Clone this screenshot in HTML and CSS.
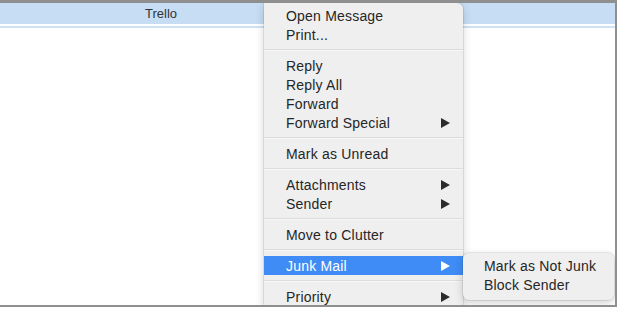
FILE: index.html
```html
<!DOCTYPE html>
<html lang="en">
<head>
    <meta charset="UTF-8">
    <title>Message list - context menu</title>
    <link rel="stylesheet" href="styles.css">
</head>
<body>
    <div class="frame">
        <div class="list">
            <div class="row row-selected">
                <div class="cell cell-from">Trello</div>
            </div>
            <div class="row-line"></div>
        </div>

        <div class="menu">
            <div class="menu-item">Open Message</div>
            <div class="menu-item">Print...</div>
            <div class="menu-sep"></div>
            <div class="menu-item">Reply</div>
            <div class="menu-item">Reply All</div>
            <div class="menu-item">Forward</div>
            <div class="menu-item has-sub">Forward Special <span class="arrow"></span></div>
            <div class="menu-sep"></div>
            <div class="menu-item">Mark as Unread</div>
            <div class="menu-sep"></div>
            <div class="menu-item has-sub">Attachments <span class="arrow"></span></div>
            <div class="menu-item has-sub">Sender <span class="arrow"></span></div>
            <div class="menu-sep"></div>
            <div class="menu-item">Move to Clutter</div>
            <div class="menu-sep"></div>
            <div class="menu-item has-sub active">Junk Mail <span class="arrow"></span></div>
            <div class="menu-sep"></div>
            <div class="menu-item has-sub">Priority <span class="arrow"></span></div>
        </div>

        <div class="menu submenu">
            <div class="menu-item">Mark as Not Junk</div>
            <div class="menu-item">Block Sender</div>
        </div>
    </div>
</body>
</html>
```

FILE: styles.css
```css
* {
    box-sizing: border-box;
    margin: 0;
    padding: 0;
}

body {
    font-family: 'Liberation Sans', Arial, sans-serif;
    background-color: white;
    color: #262626;
}

.frame {
    position: relative;
    width: 617px;
    height: 307px;
    border-top: 3px solid #8f8f8f;
    border-right: 2px solid #8f8f8f;
    border-bottom: 2px solid #8f8f8f;
    overflow: hidden;
    background-color: white;
}

.row {
    display: flex;
    height: 21px;
    align-items: center;
    font-size: 13px;
}

.row-selected {
    background-color: #c6ddf4;
}

.cell-from {
    width: 322px;
    text-align: center;
    color: #333;
}

.row-line {
    margin-top: 2px;
    height: 2px;
    background-color: #cfe2f5;
}

.menu {
    position: absolute;
    top: 0;
    left: 264px;
    width: 199px;
    padding: 3px 0;
    background-color: #efefef;
    border-radius: 0 6px 6px 6px;
    box-shadow: 0 0 0 1px rgba(0,0,0,0.08), 0 3px 10px rgba(0,0,0,0.18);
    font-size: 14px;
    letter-spacing: 0.2px;
}

.menu-item {
    display: flex;
    align-items: center;
    justify-content: space-between;
    height: 19px;
    padding: 0 13px 0 22px;
    color: #262626;
}

.menu-item.active {
    background-color: #3f8cf6;
    color: white;
}

.arrow {
    width: 0;
    height: 0;
    border-top: 5px solid transparent;
    border-bottom: 5px solid transparent;
    border-left: 9px solid #2b2b2b;
}

.menu-item.active .arrow {
    border-left-color: white;
}

.menu-sep {
    height: 2px;
    margin: 5px 0;
    background-color: #dcdcdc;
    border-bottom: 1px solid #f7f7f7;
}

.submenu {
    top: 250px;
    left: 463px;
    width: 151px;
    padding: 3px 0 6px;
    border-radius: 6px;
}

.submenu .menu-item {
    padding-left: 21px;
}
```
